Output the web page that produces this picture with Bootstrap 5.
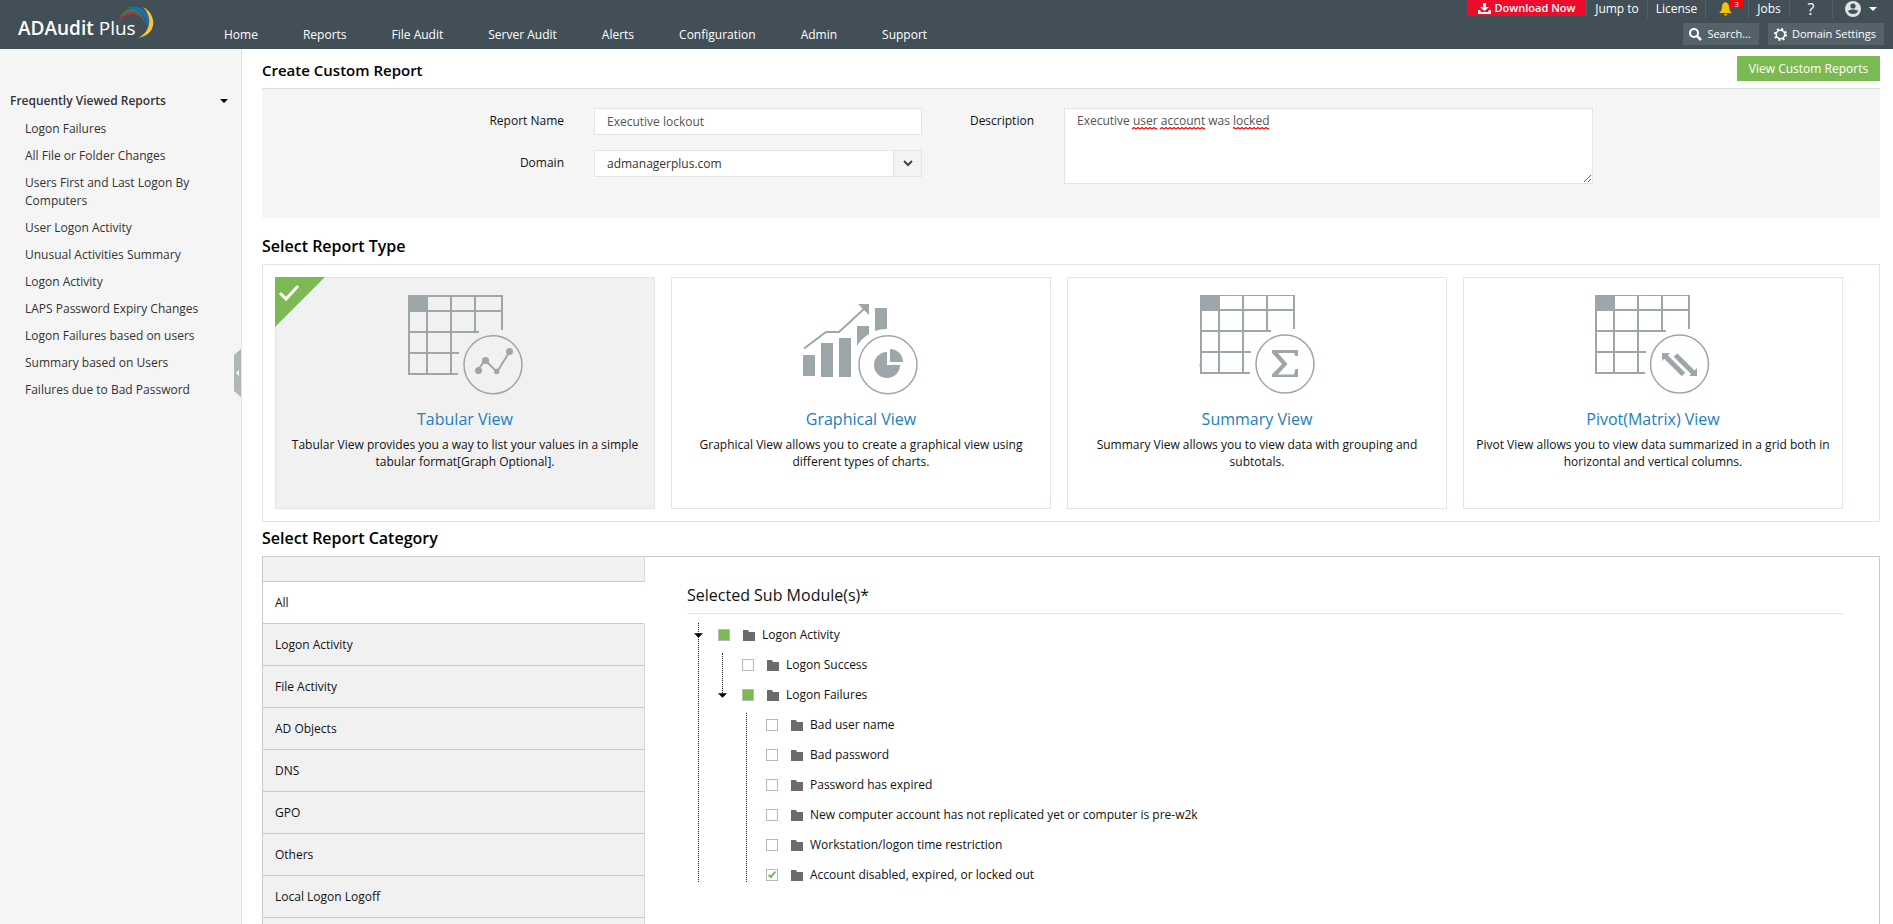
<!DOCTYPE html>
<html lang="en">
<head>
<meta charset="utf-8">
<meta name="viewport" content="width=device-width, initial-scale=1">
<title>ADAudit Plus - Create Custom Report</title>
<link rel="stylesheet" href="https://cdn.jsdelivr.net/npm/bootstrap@5.3.0/dist/css/bootstrap.min.css">
<style>
  :root { --line: #e0e5e5; --edge: #c8cbcb; --icon: #9da6a9; --green: #7bba52; }
  body { font-family: "Open Sans", sans-serif; font-size: 12px; line-height: 18px; color: #111; background: #fff; }
  a { text-decoration: none; color: inherit; }
  svg { display: block; flex: none; }
  button { font: inherit; }

  .topbar { background: #434f57; color: #fff; height: 49px; flex: none; }
  .brand { font-size: 19px; line-height: 26px; font-weight: 600; padding: 15px 0 0 18px; width: 224px; flex: none; white-space: nowrap; }
  .brand span { font-weight: 400; }
  .brand svg { position: absolute; left: 118px; top: 5px; }
  .mainnav { gap: 45px; padding-top: 26px; font-weight: 500; }
  .utils { font-size: 12px; line-height: 14px; font-weight: 500; }
  .download { background: #ee0b2b; color: #fff; border: 0; height: 16px; width: 119px; padding: 0; font-size: 11px; line-height: 12px; font-weight: 600; border-radius: 0 0 2px 2px; }
  .utils .cell { height: 18px; border-left: 1px solid #56626a; display: flex; align-items: center; justify-content: center; }
  .alert-count { position: absolute; left: 24px; top: 0; width: 13px; height: 8px; background: #f00; font-size: 8px; line-height: 8px; text-align: center; }
  .help { font-size: 16px; font-weight: 400; }
  .tools { gap: 9px; padding: 1px 9px 0 0; }
  .tool { background: #56626a; color: #fff; border: 0; height: 22px; padding: 0 8px 0 6px; font-size: 11px; font-weight: 500; gap: 5px; }

  .sidebar { width: 242px; background: #f5f5f5; border-right: 1px solid var(--line); color: #333; padding-top: 43px; flex: none; }
  .sidebar h2 { font-size: 12px; line-height: 18px; font-weight: 600; margin: 0; }
  .sidebar .heading { padding: 0 13px 0 10px; margin-bottom: 10px; }
  .sidebar ul { padding-left: 25px; padding-right: 40px; gap: 9px; }
  .collapse-handle { position: absolute; right: 0; top: 300px; width: 7px; height: 48px; padding: 0; border: 0; background: none; }

  main { padding: 0 13px 0 20px; }
  .section-title { font-size: 16px; line-height: 20px; font-weight: 600; margin: 0; color: #000; }
  .titlebar .section-title { font-size: 15px; padding-top: 2px; }
  .view-btn { background: var(--green); color: #fff; border: 0; height: 25px; width: 143px; padding: 0; font-weight: 500; }
  .titlebar { height: 39px; }
  .form-panel { border-top: 1px solid #dcdfdf; background: radial-gradient(circle, #f3f3f3 1px, #f6f6f6 1px) 0 0 / 4px 4px; padding: 19px 0 26px;
    display: grid; grid-template-columns: 302fr 328fr 82fr 529fr 257fr; grid-template-rows: 27px 27px auto; gap: 15px 30px; }
  .form-panel label { text-align: right; line-height: 26px; white-space: nowrap; }
  .form-panel .form-control, .form-panel .form-select { border: 1px solid var(--line); border-radius: 0; font-size: 12px; line-height: 17px; height: 27px; padding: 4px 12px; color: #555; background: #fff; min-width: 0; }
  .form-panel .form-select { color: #333; }
  .form-panel textarea.form-control { height: 76px; min-height: 76px; padding: 3px 12px; }
  .notes { grid-row: 1 / span 3; grid-column: 4; position: relative; }
  .notes svg { position: absolute; left: 68px; top: 19px; pointer-events: none; }
  .select-arrow { position: absolute; right: 1px; top: 1px; width: 28px; height: 25px; background: #f3f4f4; border-left: 1px solid var(--line); pointer-events: none; }

  .types { border: 1px solid var(--line); padding: 12px 36px 12px 12px; display: grid; grid-template-columns: repeat(4, 1fr); gap: 16px; }
  .type { position: relative; border: 1px solid var(--line); height: 232px; padding: 17px 12px 0; text-align: center; }
  .type.active { background: #f1f1f1; }
  .type .art { margin: 0 auto 13px; }
  .type h3 { font-size: 16px; line-height: 22px; font-weight: 400; color: #1a80c0; margin: 0 0 6px; }
  .type p { line-height: 17px; margin: 0; }
  .corner { position: absolute; left: -1px; top: -1px; }

  .category { border: 1px solid var(--edge); border-bottom: 0; min-height: 0; }
  .cat-list { width: 382px; flex: none; }
  .cat-list .item { background: #f1f1f1; border-bottom: 1px solid var(--edge); border-right: 1px solid #d8dbdb; padding: 0 12px; height: 42px; line-height: 41px; flex: none; display: block; }
  .cat-list .item.active { background: #fff; border-right-color: #fff; }
  .cat-list .item.blank { height: 25px; }
  .cat-list .item.rest { flex: 1 1 0; border-bottom: 0; height: auto; }
  .modules { padding: 28px 36px 0 42px; }
  .modules h2 { font-size: 16px; line-height: 20px; font-weight: 400; margin: 0 0 9px; padding-bottom: 8px; border-bottom: 1px solid var(--line); }
  .tree { list-style: none; margin: 0; padding: 0; position: relative; }
  .tree .tree { padding-left: 24px; margin-top: 6px; }
  .tree > li + li { margin-top: 6px; }
  .tree::before { content: ""; position: absolute; left: 11px; top: 0; bottom: 5px; border-left: 1px dotted #222; }
  .tree .tree::before { left: 35px; }
  .tree .tree.stub::before { bottom: auto; height: 42px; }
  .node { height: 24px; display: flex; align-items: center; }
  .node .toggle { width: 23px; height: 24px; padding: 0; border: 0; background: none; display: flex; align-items: center; justify-content: center; position: relative; }
  .node .pad { width: 23px; }
  .node input { appearance: none; width: 12px; height: 12px; margin: 0 13px 0 8px; border: 1px solid #b5bbbd; background: #fff; flex: none; display: grid; place-items: center; }
  .node input:indeterminate { background: var(--green); }
  .node input:checked::after { content: ""; width: 8px; height: 4px; border: solid var(--green); border-width: 0 0 2px 2px; transform: translateY(-1px) rotate(-50deg); }
  .node label { display: flex; align-items: center; gap: 7px; white-space: nowrap; }
</style>
</head>
<body class="d-flex flex-column vh-100 overflow-hidden">
<svg width="0" height="0" class="position-absolute" aria-hidden="true">
  <defs>
    <g id="grid" fill="none" stroke="#9da6a9" stroke-width="2">
      <path d="M1 0V80M19 0V79M43 0V79M67 0V38M94 0V35M0 1H95M0 16H94M0 37H71M0 58H51M0 79H50"/>
      <path d="M0 0H19V16H0Z" fill="#9da6a9" stroke="none"/>
    </g>
    <symbol id="folder" viewBox="0 0 12 11"><path d="M0 0H5L6 2H12V11H0Z" fill="#6b6b6d"/></symbol>
    <symbol id="caret" viewBox="0 0 8 4"><path d="M0 0H8L4 4Z" fill="currentColor"/></symbol>
  </defs>
</svg>

<header class="topbar d-flex position-relative">
  <a class="brand position-relative" href="#">ADAudit <span>Plus</span>
    <svg width="37" height="35" viewBox="0 0 37 35" aria-hidden="true">
      <path d="M1 18C3 5 17 3 25 14C17 7 7 7 1 18Z" fill="#c4283f"/>
      <path d="M1 14C7 0 23 -1 28 20C22 4 9 3 1 14Z" fill="#17905a"/>
      <path d="M9 3C23 -3 38 11 29 26C30 11 22 3 9 3Z" fill="#1c6cb8"/>
      <path d="M25 2C39 9 40 30 20 33C33 27 35 12 25 2Z" fill="#fbc72c"/>
    </svg>
  </a>
  <nav class="mainnav d-flex" aria-label="Main">
    <a href="#">Home</a><a href="#">Reports</a><a href="#">File Audit</a><a href="#">Server Audit</a><a href="#">Alerts</a><a href="#">Configuration</a><a href="#">Admin</a><a href="#">Support</a>
  </nav>
  <div class="utils ms-auto d-flex flex-column align-items-end">
    <div class="d-flex">
      <button type="button" class="download d-flex align-items-center justify-content-center gap-1">
        <svg width="13" height="11" viewBox="0 0 13 11" fill="#fff" aria-hidden="true"><path d="M5 0H8V4H11L6.500 8L2 4H5ZM0 7H2L3 9H10L11 7H13V11H0Z"/></svg>
        Download Now
      </button>
      <a class="cell" style="width:61px" href="#">Jump to</a>
      <a class="cell" style="width:58px" href="#">License</a>
      <a class="cell position-relative" style="width:43px" href="#" aria-label="Notifications">
        <svg class="me-1" width="13" height="14" viewBox="0 0 13 14" fill="#f3c500" aria-hidden="true"><path d="M6.500 0C9.500 1 10 3 10.200 6C10.400 8.500 11.500 9.500 13 11H0C1.500 9.500 2.600 8.500 2.800 6C3 3 3.500 1 6.500 0ZM5 12H8C7.800 14 5.200 14 5 12Z"/></svg>
        <span class="alert-count">3</span>
      </a>
      <a class="cell" style="width:41px" href="#">Jobs</a>
      <a class="cell help" style="width:43px" href="#">?</a>
      <a class="cell gap-2 pe-1" style="width:61px" href="#" aria-label="Account">
        <svg width="16" height="16" viewBox="0 0 16 16" aria-hidden="true"><circle cx="8" cy="8" r="8" fill="#dfe2e3"/><circle cx="8" cy="5" r="2.600" fill="#434f57"/><path d="M3 10C5 8 11 8 13 10C12 14 4 14 3 10Z" fill="#434f57"/></svg>
        <svg width="8" height="4"><use href="#caret"/></svg>
      </a>
    </div>
    <div class="tools d-flex mt-1">
      <button type="button" class="tool d-flex align-items-center">
        <svg width="13" height="13" viewBox="0 0 13 13" fill="none" stroke="#fff" stroke-width="2" aria-hidden="true"><circle cx="5" cy="5" r="4"/><path d="M8 8L12 12" stroke-width="2.500"/></svg>
        Search...
      </button>
      <button type="button" class="tool d-flex align-items-center">
        <svg width="13" height="13" viewBox="0 0 13 13" fill="none" stroke="#fff" aria-hidden="true"><circle cx="6.500" cy="6.500" r="4.200" stroke-width="1.500"/><circle cx="6.500" cy="6.500" r="5.500" stroke-width="2" stroke-dasharray="2 2.320"/></svg>
        Domain Settings
      </button>
    </div>
  </div>
</header>

<div class="d-flex flex-grow-1" style="min-height:0">
  <aside class="sidebar position-relative">
    <div class="heading d-flex align-items-center justify-content-between">
      <h2>Frequently Viewed Reports</h2>
      <svg width="8" height="4" color="#000" aria-hidden="true"><use href="#caret"/></svg>
    </div>
    <ul class="list-unstyled d-flex flex-column mb-0">
      <li><a href="#">Logon Failures</a></li>
      <li><a href="#">All File or Folder Changes</a></li>
      <li><a href="#">Users First and Last Logon By Computers</a></li>
      <li><a href="#">User Logon Activity</a></li>
      <li><a href="#">Unusual Activities Summary</a></li>
      <li><a href="#">Logon Activity</a></li>
      <li><a href="#">LAPS Password Expiry Changes</a></li>
      <li><a href="#">Logon Failures based on users</a></li>
      <li><a href="#">Summary based on Users</a></li>
      <li><a href="#">Failures due to Bad Password</a></li>
    </ul>
    <button type="button" class="collapse-handle" aria-label="Collapse sidebar">
      <svg width="7" height="48" viewBox="0 0 7 48"><path d="M7 0V48L0 42V6Z" fill="#b0b7b9"/><path d="M5 21V27L2 24Z" fill="#fff"/></svg>
    </button>
  </aside>

  <main class="flex-grow-1 d-flex flex-column" style="min-width:0">
    <div class="titlebar d-flex align-items-center justify-content-between">
      <h1 class="section-title">Create Custom Report</h1>
      <button type="button" class="view-btn">View Custom Reports</button>
    </div>

    <form class="form-panel">
      <label for="report-name">Report Name</label>
      <input class="form-control" id="report-name" type="text" value="Executive lockout">
      <label for="description">Description</label>
      <div class="notes">
        <textarea class="form-control" id="description" spellcheck="false">Executive user account was locked</textarea>
        <svg width="138" height="3" aria-hidden="true">
          <defs><pattern id="wave" width="4" height="3" patternUnits="userSpaceOnUse"><path d="M0 2L2 0.500L4 2" fill="none" stroke="#f00" stroke-width="1.200"/></pattern></defs>
          <rect x="0" width="25" height="3" fill="url(#wave)"/><rect x="28" width="45" height="3" fill="url(#wave)"/><rect x="101" width="36" height="3" fill="url(#wave)"/>
        </svg>
      </div>
      <label for="domain" style="grid-column:1">Domain</label>
      <div class="position-relative">
        <select class="form-select" id="domain"><option>admanagerplus.com</option></select>
        <span class="select-arrow d-flex align-items-center justify-content-center"><svg width="10" height="7" viewBox="0 0 10 7" fill="none" stroke="#444" stroke-width="2" aria-hidden="true"><path d="M1 1L5 5L9 1"/></svg></span>
      </div>
    </form>

    <h2 class="section-title" style="padding:18px 0 8px">Select Report Type</h2>
    <section class="types">
      <a class="type active" href="#">
        <svg class="corner" width="50" height="50" viewBox="0 0 50 50" aria-hidden="true"><path d="M0 0H50L0 50Z" fill="#7bba52"/><path d="M5 16L11 22L23 9" fill="none" stroke="#fff" stroke-width="3"/></svg>
        <svg class="art" width="116" height="100" viewBox="-1 0 116 100" aria-hidden="true"><use href="#grid"/><g fill="none" stroke="#9da6a9" stroke-width="1.500"><circle cx="85" cy="69.700" r="29"/><path d="M70 75L77 65L89 77L102 56" stroke-width="2"/></g><g fill="#9da6a9"><circle cx="70.500" cy="75.500" r="3.500"/><circle cx="77.500" cy="65.500" r="3.500"/><circle cx="88.700" cy="76.500" r="2.700"/><circle cx="101.500" cy="56.500" r="3.500"/></g></svg>
        <h3>Tabular View</h3>
        <p>Tabular View provides you a way to list your values in a simple tabular format[Graph Optional].</p>
      </a>
      <a class="type" href="#">
        <svg class="art" width="116" height="100" viewBox="0 0 116 100" aria-hidden="true"><g fill="#9da6a9"><path d="M0 60H12V81H0ZM18 48H30V82H18ZM36 43H48V82H36ZM54 31H66V39Q58 44 54 51ZM72 13H84V34Q77 34 72 36Z"/><path d="M55 9H66V20Z"/><path d="M84 70V57A13 13 0 1 0 97 70Z"/><path d="M87 67V54A13 13 0 0 1 100 67Z"/></g><g fill="none" stroke="#9da6a9"><path d="M1 53.500L23 37H36L62 13" stroke-width="2"/><circle cx="85" cy="69.700" r="29" stroke-width="1.500"/></g></svg>
        <h3>Graphical View</h3>
        <p>Graphical View allows you to create a graphical view using different types of charts.</p>
      </a>
      <a class="type" href="#">
        <svg class="art" width="116" height="100" viewBox="-1 1 116 100" aria-hidden="true"><use href="#grid"/><path d="M1 67Q-1 71 1 76" fill="none" stroke="#9da6a9"/><circle cx="85" cy="70" r="29" fill="none" stroke="#9da6a9" stroke-width="1.500"/><path d="M72 56H98V62H95.500L94 59H78L87.500 70L78 80.500H94L95.500 75H98V83H72V80.500L82 70L72 59Z" fill="#9da6a9"/></svg>
        <h3>Summary View</h3>
        <p>Summary View allows you to view data with grouping and subtotals.</p>
      </a>
      <a class="type" href="#">
        <svg class="art" width="116" height="100" viewBox="0 1 116 100" aria-hidden="true"><use href="#grid"/><circle cx="84.500" cy="70" r="29" fill="none" stroke="#9da6a9" stroke-width="1.500"/><path d="M70 62L88.500 80.500M80.500 61L99 79.500" fill="none" stroke="#9da6a9" stroke-width="5"/><path d="M67 59H75L67 67ZM102 82H94L102 74Z" fill="#9da6a9"/></svg>
        <h3>Pivot(Matrix) View</h3>
        <p>Pivot View allows you to view data summarized in a grid both in horizontal and vertical columns.</p>
      </a>
    </section>

    <h2 class="section-title" style="padding:6px 0 8px">Select Report Category</h2>
    <section class="category d-flex flex-grow-1">
      <nav class="cat-list d-flex flex-column" aria-label="Report category">
        <div class="item blank"></div>
        <a class="item active" href="#">All</a>
        <a class="item" href="#">Logon Activity</a>
        <a class="item" href="#">File Activity</a>
        <a class="item" href="#">AD Objects</a>
        <a class="item" href="#">DNS</a>
        <a class="item" href="#">GPO</a>
        <a class="item" href="#">Others</a>
        <a class="item" href="#">Local Logon Logoff</a>
        <div class="item rest"></div>
      </nav>
      <div class="modules flex-grow-1">
        <h2>Selected Sub Module(s)*</h2>
        <ul class="tree">
          <li>
            <div class="node"><button type="button" class="toggle" aria-label="Collapse Logon Activity"><svg width="9" height="5"><use href="#caret"/></svg></button><input type="checkbox" class="partial" id="m1"><label for="m1"><svg width="12" height="11"><use href="#folder"/></svg>Logon Activity</label></div>
            <ul class="tree stub">
              <li><div class="node"><span class="pad"></span><input type="checkbox" id="m2"><label for="m2"><svg width="12" height="11"><use href="#folder"/></svg>Logon Success</label></div></li>
              <li>
                <div class="node"><button type="button" class="toggle" aria-label="Collapse Logon Failures"><svg width="9" height="5"><use href="#caret"/></svg></button><input type="checkbox" class="partial" id="m3"><label for="m3"><svg width="12" height="11"><use href="#folder"/></svg>Logon Failures</label></div>
                <ul class="tree">
                  <li><div class="node"><span class="pad"></span><input type="checkbox" id="m4"><label for="m4"><svg width="12" height="11"><use href="#folder"/></svg>Bad user name</label></div></li>
                  <li><div class="node"><span class="pad"></span><input type="checkbox" id="m5"><label for="m5"><svg width="12" height="11"><use href="#folder"/></svg>Bad password</label></div></li>
                  <li><div class="node"><span class="pad"></span><input type="checkbox" id="m6"><label for="m6"><svg width="12" height="11"><use href="#folder"/></svg>Password has expired</label></div></li>
                  <li><div class="node"><span class="pad"></span><input type="checkbox" id="m7"><label for="m7"><svg width="12" height="11"><use href="#folder"/></svg>New computer account has not replicated yet or computer is pre-w2k</label></div></li>
                  <li><div class="node"><span class="pad"></span><input type="checkbox" id="m8"><label for="m8"><svg width="12" height="11"><use href="#folder"/></svg>Workstation/logon time restriction</label></div></li>
                  <li><div class="node"><span class="pad"></span><input type="checkbox" id="m9" checked><label for="m9"><svg width="12" height="11"><use href="#folder"/></svg>Account disabled, expired, or locked out</label></div></li>
                </ul>
              </li>
            </ul>
          </li>
        </ul>
      </div>
    </section>
  </main>
</div>
<script src="https://cdn.jsdelivr.net/npm/bootstrap@5.3.0/dist/js/bootstrap.bundle.min.js"></script>
<script>
  document.querySelectorAll('.partial').forEach(function (box) { box.indeterminate = true; });
</script>
</body>
</html>
